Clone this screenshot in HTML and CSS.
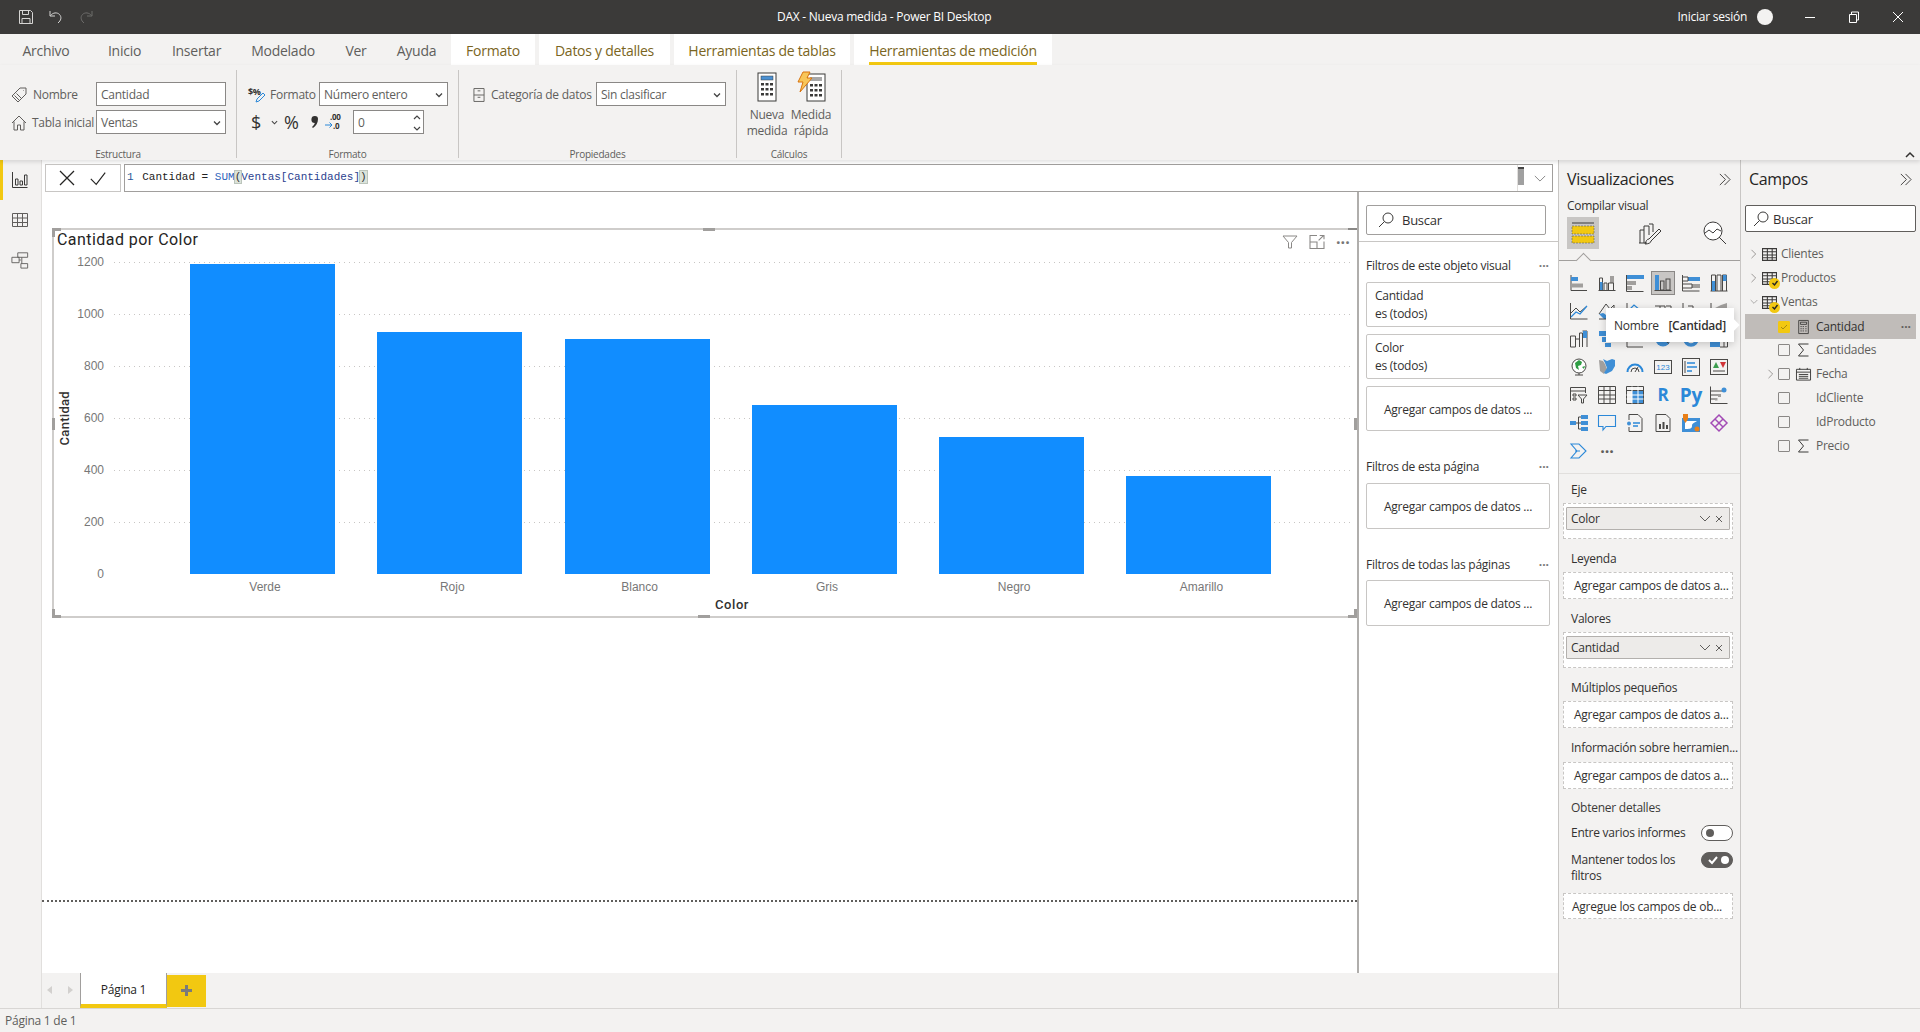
FILE: index.html
```html
<!DOCTYPE html>
<html lang="es">
<head>
<meta charset="utf-8">
<title>DAX - Nueva medida - Power BI Desktop</title>
<link rel="stylesheet" href="styles.css">
</head>
<body>
<header class="titlebar">
  <div class="qat">
    <svg class="qi" viewBox="0 0 16 16"><path d="M1.500 1.500h11l2 2v11h-13zM4.500 1.500v4h6v-4M4 14.500v-5h8v5"/></svg>
    <svg class="qi" viewBox="0 0 16 16"><path d="M2 2v5h5M2.500 6.500C5 3.500 9 3 11.500 5.500c2.500 2.700 1.500 6-1.500 8.500"/></svg>
    <svg class="qi off" viewBox="0 0 16 16"><path d="M14 2v5H9M13.500 6.500C11 3.500 7 3 4.500 5.500 2 8.200 3 11.500 6 14"/></svg>
  </div>
  <div class="doc-title">DAX - Nueva medida - Power BI Desktop</div>
  <div class="win">
    <span class="signin">Iniciar sesión</span>
    <span class="avatar"></span>
    <span class="wbtn"><svg viewBox="0 0 12 12"><path d="M1 6.500h10"/></svg></span>
    <span class="wbtn"><svg viewBox="0 0 12 12"><path d="M1.500 3.500h7v8h-7zM3.500 3.500V1h7v8h-2"/></svg></span>
    <span class="wbtn"><svg viewBox="0 0 12 12"><path d="M1 1l10 10M11 1L1 11"/></svg></span>
  </div>
</header>

<nav class="tabs">
  <span class="tab">Archivo</span>
  <span class="tab">Inicio</span>
  <span class="tab">Insertar</span>
  <span class="tab">Modelado</span>
  <span class="tab">Ver</span>
  <span class="tab">Ayuda</span>
  <span class="tab ctx">Formato</span>
  <span class="tab ctx">Datos y detalles</span>
  <span class="tab ctx">Herramientas de tablas</span>
  <span class="tab ctx on"><span class="tab-in">Herramientas de medición</span></span>
</nav>

<section class="ribbon">
  <div class="group g1">
    <div class="g-body">
      <div class="frow f1">
        <span class="flabel"><svg class="ri" viewBox="0 0 16 16"><path d="M1 9l8-8h6v6l-8 8zM12 3.500h.5M3.500 8.500l5 5M5.500 6.500l5 5"/></svg>Nombre</span>
        <span class="input">Cantidad</span>
      </div>
      <div class="frow f1">
        <span class="flabel tight"><svg class="ri" viewBox="0 0 16 16"><path d="M1 8l7-7 7 7M3 6.500V15h3.500v-5h3v5H13V6.500"/></svg>Tabla inicial</span>
        <span class="input sel">Ventas<svg class="dd" viewBox="0 0 8 8"><path d="M1 2.500l3 3 3-3"/></svg></span>
      </div>
    </div>
    <div class="g-label">Estructura</div>
  </div>
  <div class="group g2">
    <div class="g-body">
      <div class="frow f2">
        <span class="flabel"><svg class="ri wide" viewBox="0 0 18 16"><text x="0" y="8" class="dollar">$%</text><path class="pen" d="M8 15l1-3 6-6 2 2-6 6z"/></svg>Formato</span>
        <span class="input sel">Número entero<svg class="dd" viewBox="0 0 8 8"><path d="M1 2.500l3 3 3-3"/></svg></span>
      </div>
      <div class="frow f2b">
        <span class="sym">$</span>
        <svg class="tiny" viewBox="0 0 8 8"><path d="M1 2.500l3 3 3-3"/></svg>
        <span class="sym">%</span>
        <svg class="comma" viewBox="0 0 8 14"><path d="M4 1a3 3 0 0 1 3 3c0 4-2 7-5 9l-1-1c1.500-1.200 2.500-2.500 2.800-4A3 3 0 0 1 4 1z"/></svg>
        <svg class="dec" viewBox="0 0 18 18"><text x="5" y="7" class="dec-t">.00</text><text x="8" y="16" class="dec-t">.0</text><path class="arrow" d="M0 12h7M4.500 9.500L7 12l-2.500 2.500"/></svg>
        <span class="input spin">0<svg class="spin-i" viewBox="0 0 8 20"><path d="M1 6l3-3 3 3M1 14l3 3 3-3"/></svg></span>
      </div>
    </div>
    <div class="g-label">Formato</div>
  </div>
  <div class="group g3">
    <div class="g-body">
      <div class="frow f3">
        <span class="flabel"><svg class="ri" viewBox="0 0 13 16"><path d="M1 1h11v14H1zM1 8h11M5 3.500h3M5 10.500h3"/></svg>Categoría de datos</span>
        <span class="input sel">Sin clasificar<svg class="dd" viewBox="0 0 8 8"><path d="M1 2.500l3 3 3-3"/></svg></span>
      </div>
    </div>
    <div class="g-label">Propiedades</div>
  </div>
  <div class="group g4">
    <div class="g-body bigs">
      <div class="big">
        <svg class="big-i" viewBox="0 0 30 30">
          <rect class="calc" x="6" y="1" width="18" height="28"/><rect class="calc-b" x="9" y="4" width="12" height="4"/>
          <path class="keys" d="M9 11h3v2.500H9zM13.500 11h3v2.500h-3zM18 11h3v2.500h-3zM9 16h3v2.500H9zM13.500 16h3v2.500h-3zM18 16h3v2.500h-3zM9 21h3v2.500H9zM13.500 21h3v2.500h-3zM18 21h3v2.500h-3z"/>
        </svg>
        <span>Nueva<br>medida</span>
      </div>
      <div class="big">
        <svg class="big-i" viewBox="0 0 30 30">
          <rect class="calc" x="11" y="2" width="18" height="27"/><rect class="calc-g" x="14" y="5" width="12" height="4"/>
          <path class="keys" d="M14 12h3v2.500h-3zM18.500 12h3v2.500h-3zM23 12h3v2.500h-3zM14 17h3v2.500h-3zM18.500 17h3v2.500h-3zM23 17h3v2.500h-3zM14 22h3v2.500h-3zM18.500 22h3v2.500h-3zM23 22h3v2.500h-3z"/>
          <path class="bolt" d="M7 0h7l-3 6h5L4 20l3-10H2z"/>
        </svg>
        <span>Medida<br>rápida</span>
      </div>
    </div>
    <div class="g-label">Cálculos</div>
  </div>
  <svg class="collapse" viewBox="0 0 10 8"><path d="M1 6l4-4 4 4"/></svg>
</section>

<main class="main">
  <aside class="nav">
    <div class="nav-item on"><svg viewBox="0 0 18 18"><path d="M1.500 1v15.500h15M4.500 14V8h2.500v6zM9 14V10h2.500v4zM13.500 14V4H16v10z"/></svg></div>
    <div class="nav-item"><svg viewBox="0 0 18 18"><path d="M1.500 2.500h15v13h-15zM1.500 7h15M1.500 11.500h15M6.500 2.500v13M11.500 2.500v13"/></svg></div>
    <div class="nav-item"><svg viewBox="0 0 20 20"><path d="M7.500 2h11v5h-11zM1 7h8v6H1zM11 14h7.500v5H11zM9 10h2M12 7v7"/></svg></div>
  </aside>

  <div class="center">
    <div class="formula">
      <div class="fx-btns">
        <svg viewBox="0 0 18 18"><path d="M2 2l14 14M16 2L2 16"/></svg>
        <svg viewBox="0 0 20 18"><path d="M2 10l6 6L18 3"/></svg>
      </div>
      <div class="fx-input">
        <code class="code"><span class="ln">1</span> Cantidad = <span class="fn">SUM</span><span class="par">(</span><span class="ref">Ventas[Cantidades]</span><span class="par">)</span></code>
        <div class="fx-end">
          <span class="mini"></span>
          <svg class="fx-dd" viewBox="0 0 14 8"><path d="M1 1l6 6 6-6"/></svg>
        </div>
      </div>
    </div>
    <div class="work">
      <div class="canvas">
        <article class="visual">
          <i class="h tl"></i><i class="h tc"></i><i class="h tr"></i><i class="h ml"></i><i class="h mr"></i><i class="h bl"></i><i class="h bc"></i><i class="h br"></i>
          <div class="v-head">
            <h2 class="v-title">Cantidad por Color</h2>
            <div class="v-tools">
              <svg viewBox="0 0 16 14"><path d="M1 1h14L9.500 7.500V13h-3V7.500z"/></svg>
              <svg viewBox="0 0 14 13"><path d="M7 .5H.5v12h13V6M.5 6.500H7v6M8.500 5L13 .5M9.500.5h4V4"/></svg>
              <span class="dots">···</span>
            </div>
          </div>
          <div class="chart">
            <div class="y-title">Cantidad</div>
            <div class="y-labels"><span>1200</span><span>1000</span><span>800</span><span>600</span><span>400</span><span>200</span><span>0</span></div>
            <div class="plot">
              <div class="grid-lines"><i></i><i></i><i></i><i></i><i></i><i></i></div>
              <div class="bars">
                <div class="bar" style="height:99.36%"></div>
                <div class="bar" style="height:77.56%"></div>
                <div class="bar" style="height:75.32%"></div>
                <div class="bar" style="height:54.17%"></div>
                <div class="bar" style="height:43.91%"></div>
                <div class="bar" style="height:31.41%"></div>
              </div>
            </div>
            <div class="x-labels"><span>Verde</span><span>Rojo</span><span>Blanco</span><span>Gris</span><span>Negro</span><span>Amarillo</span></div>
            <div class="x-title">Color</div>
          </div>
        </article>
        <div class="page-end"></div>
      </div>
      <aside class="filters">
        <div class="f-search-wrap">
          <div class="search f-search"><svg class="mag" viewBox="0 0 16 16"><circle cx="10" cy="6" r="5"/><path d="M6.500 9.500L1 15"/></svg>Buscar</div>
        </div>
        <div class="f-head first"><span>Filtros de este objeto visual</span><span class="fdots">···</span></div>
        <div class="f-card"><span>Cantidad</span><span>es (todos)</span></div>
        <div class="f-card"><span>Color</span><span>es (todos)</span></div>
        <div class="f-card add">Agregar campos de datos ...</div>
        <div class="f-head"><span>Filtros de esta página</span><span class="fdots">···</span></div>
        <div class="f-card add tall">Agregar campos de datos ...</div>
        <div class="f-head last"><span>Filtros de todas las páginas</span><span class="fdots">···</span></div>
        <div class="f-card add tall">Agregar campos de datos ...</div>
      </aside>
    </div>
    <div class="pagebar">
      <span class="pg-arrow left"></span>
      <span class="pg-arrow right"></span>
      <span class="pg-tab">Página 1</span>
      <span class="pg-add"></span>
    </div>
  </div>

  <aside class="viz">
    <div class="p-head"><span>Visualizaciones</span><svg class="chev2" viewBox="0 0 14 14"><path d="M2 1l6 6-6 6M7 1l6 6-6 6"/></svg></div>
    <div class="p-sub">Compilar visual</div>
    <div class="modes">
      <span class="mode on"><svg viewBox="0 0 24 24"><path class="ln-d" d="M1 2h22"/><rect class="ye" x="1" y="5" width="22" height="8"/><rect class="ye" x="1" y="15" width="22" height="7"/></svg></span>
      <span class="mode"><svg viewBox="0 0 24 24"><path class="ln-d" d="M2 22V9h4M6 22V5h5v9M11 3h4v8M1 22h8"/><path class="ln-d" d="M21 8L11 18c-2 0-3 2-4 5 3 0 6-1 6-3L23 10z"/></svg></span>
      <span class="mode an"><svg viewBox="0 0 24 24"><circle class="ln-d2" cx="10" cy="10" r="9"/><path class="ln-d" d="M2 12l4-3 4 3 4-4 4 2M16 16l7 7"/></svg></span>
      <i class="notch"></i>
    </div>
    <div class="icons">
      <!-- row 1 -->
      <svg class="vi" viewBox="0 0 18 18"><path class="ax" d="M1 1v15.500h16"/><rect class="bl" x="1" y="3" width="7" height="4"/><rect class="gr" x="1" y="9.500" width="12" height="4"/></svg>
      <svg class="vi" viewBox="0 0 18 18"><path class="ax" d="M.5 16.500h17M1.500 16V4h3v12M6 16V9h3v7"/><rect class="bl" x="2" y="8" width="2.500" height="8"/><rect class="gr" x="12" y="2" width="4" height="7"/><path class="ax" d="M10.500 16V9h5v7"/></svg>
      <svg class="vi" viewBox="0 0 18 18"><rect class="bl" x="0" y="1" width="18" height="4"/><rect class="gr" x="0" y="7" width="10" height="4"/><rect class="gr" x="0" y="12" width="6" height="4"/><path class="ax" d="M.5 1v16.500h17"/></svg>
      <span class="vi-sel"><svg class="vi" viewBox="0 0 18 18"><rect class="bl" x="1" y="1" width="4" height="15"/><rect class="ax" x="6.500" y="7" width="3.500" height="9"/><rect class="ax" x="12" y="5" width="4" height="11"/><path class="ax" d="M.5 16.500h17"/></svg></span>
      <svg class="vi" viewBox="0 0 18 18"><path class="ax" d="M.5 1v16h17"/><rect class="bl" x="6" y="3" width="12" height="4"/><rect class="gr" x="10" y="10" width="8" height="4"/><path class="ax" d="M1 3h5v4H1M1 10h9v4H1"/></svg>
      <svg class="vi" viewBox="0 0 18 18"><path class="ax" d="M.5 17h17M1.500 17V1h4v16M7 17V1h4v16M12.500 17V1h4v16"/><rect class="bl" x="2" y="7" width="3" height="10"/><rect class="bl" x="13" y="1" width="3.500" height="6"/></svg>
      <!-- row 2 -->
      <svg class="vi" viewBox="0 0 18 18"><path class="ax" d="M.5 1v16h17"/><path class="ax" d="M1 11l5-5 4 4 7-6"/><path class="line-b" d="M1 15l5-5 4 2 7-8"/></svg>
      <svg class="vi" viewBox="0 0 18 18"><path class="bl" d="M1 12l5 5h5l-4-5-2-1z"/><path class="ax" d="M1 12L8 2l4 5 4-4v14H1"/></svg>
      <svg class="vi" viewBox="0 0 18 18"><path class="ax" d="M1 1v16h16"/><path class="line-b" d="M2 9l6-6 6 5"/></svg>
      <svg class="vi" viewBox="0 0 18 18"><path class="ax" d="M1 4h5v13M6 4h5v13M12 4h5v13"/></svg>
      <svg class="vi" viewBox="0 0 18 18"><path class="ax" d="M1 1v16h16M6 4h5v13"/></svg>
      <svg class="vi" viewBox="0 0 18 18"><path class="ax" d="M1 1v16h16"/><path class="gr" d="M5 6l6-3v6l-6 3zM11 3l6-2v6l-6 2z"/></svg>
      <!-- row 3 -->
      <svg class="vi" viewBox="0 0 18 18"><path class="ax" d="M.5 6v11M.5 17h5V6H.5M5.500 9h4v8M9.500 17V3h3M12.500 3v14M12.500 1H17v16"/><rect class="bl" x="13" y="1" width="4" height="7"/></svg>
      <svg class="vi" viewBox="0 0 18 18"><rect class="bl" x="1" y="1" width="15" height="5"/><rect class="bl" x="4" y="7" width="11" height="5"/><rect class="bl" x="7" y="13" width="6" height="4"/></svg>
      <svg class="vi" viewBox="0 0 18 18"><path class="ax" d="M1 1v16h16"/><rect class="bl" x="11" y="6" width="4" height="4"/><rect class="gr" x="5" y="9" width="3" height="3"/></svg>
      <svg class="vi" viewBox="0 0 18 18"><circle class="pie" cx="9" cy="9" r="7.500"/><path class="ax" d="M9 9V1.500M9 9l6 4.500"/></svg>
      <svg class="vi" viewBox="0 0 18 18"><circle class="donut" cx="9" cy="9" r="6"/></svg>
      <svg class="vi" viewBox="0 0 18 18"><rect class="bl" x="0" y="1" width="10" height="16"/><path class="ax" d="M10 1h7.500v16H10M10 10h7.500M14 10v7"/></svg>
      <!-- row 4 -->
      <svg class="vi" viewBox="0 0 18 18"><circle class="globe" cx="9" cy="8" r="7"/><path class="grn" d="M5 5l4-3 3 2-1 3-3 1 1 4-3-2zM12 9l3-1-1 3z"/><path class="ax" d="M5 17h8M9 15v2"/></svg>
      <svg class="vi" viewBox="0 0 18 18"><path class="gr" d="M1 2l4 1 2 3 2 5-3 5-4-3z"/><path class="bl" d="M5 1l4 2 5-2 3 1v6l-3 5-6 3-2-1 3-5-2-5z"/></svg>
      <svg class="vi" viewBox="0 0 18 18"><path class="ax2" d="M1.500 14a7.500 7.500 0 0 1 15 0"/><path class="ax" d="M5 14a4 4 0 0 1 8 0M9 14l3-5"/></svg>
      <svg class="vi" viewBox="0 0 18 18"><rect class="ax" x=".5" y="2.500" width="17" height="13"/><text x="9" y="12" class="num">123</text></svg>
      <svg class="vi" viewBox="0 0 18 18"><rect class="ax" x=".5" y=".5" width="17" height="17"/><path class="line-b2" d="M5 5h8M5 9h10M5 13h5"/><path class="ax" d="M3 3v12"/></svg>
      <svg class="vi" viewBox="0 0 18 18"><rect class="ax" x=".5" y="1.500" width="17" height="15"/><path class="grn2" d="M6 4l3 6H3z"/><path class="red" d="M10 4h6l-3 6z"/><path class="ax" d="M3 13h12"/></svg>
      <!-- row 5 -->
      <svg class="vi" viewBox="0 0 18 18"><path class="ax" d="M.5 15V1.500h15V7M.5 5h15M3 8h3v2H3zM3 12h3v2H3z"/><path class="ax" d="M8 9h9l-3.500 4v4h-2v-4z"/></svg>
      <svg class="vi" viewBox="0 0 18 18"><path class="ax" d="M.5.5h17v17H.5zM.5 4.500h17M.5 9h17M.5 13h17M6 .5v17M12 .5v17"/></svg>
      <svg class="vi" viewBox="0 0 18 18"><rect class="bl" x="6" y="5" width="12" height="13"/><path class="ax" d="M.5.5h17v17H.5zM.5 4.500h17"/><path class="wht" d="M.5 9h17M.5 13h17M6 .5v17M12 .5v17"/></svg>
      <span class="vi-t r">R</span>
      <span class="vi-t py">Py</span>
      <svg class="vi" viewBox="0 0 18 18"><path class="ax" d="M.5.5v17h17M1 5h11M1 9h7M1 13h4"/><circle class="bl" cx="14" cy="4" r="2.500"/><rect class="gr" x="8" y="8" width="3" height="3"/><rect class="gr" x="5" y="12" width="2.500" height="2.500"/></svg>
      <!-- row 6 -->
      <svg class="vi" viewBox="0 0 18 18"><rect class="bl" x="0" y="7" width="6" height="4"/><rect class="bl" x="11" y="1" width="7" height="4"/><rect class="bl" x="11" y="7" width="7" height="4"/><rect class="bl" x="11" y="13" width="7" height="4"/><path class="ax" d="M6 9h5M8.500 3v12M8.500 3H11M8.500 15H11"/></svg>
      <svg class="vi" viewBox="0 0 18 18"><path class="lb" d="M.5 1.500h17v11H8L5 16v-3.500H.5z"/></svg>
      <svg class="vi" viewBox="0 0 18 18"><path class="ax" d="M3 6V.5h9l4 4v13H3V13"/><circle class="bl" cx="3" cy="9.500" r="2"/><path class="line-b2" d="M7 9h7M7 12h5"/></svg>
      <svg class="vi" viewBox="0 0 18 18"><path class="ax" d="M2 .5h10l4 4v13H2z"/><path class="ds" d="M5 10h2v5H5zM8.500 8h2v7h-2zM12 11h2v4h-2z"/></svg>
      <svg class="vi" viewBox="0 0 18 18"><path class="bl" d="M0 4h18v14H0z"/><path class="wht-f" d="M3 7h12c-3 2-5 2-5 5s-3 3-7 3z"/><path class="or" d="M1 0h5v5L3.500 9 1 5z"/><circle class="or" cx="15" cy="15" r="2.500"/></svg>
      <svg class="vi" viewBox="0 0 18 18"><path class="pur" d="M9 1l8 8-8 8-8-8zM5 5l8 8M13 5L5 13"/></svg>
      <!-- row 7 -->
      <svg class="vi" viewBox="0 0 18 18"><path class="lb" d="M1 2h8l7 7-7 7H1l6-7zM5 9h5"/></svg>
      <span class="vi-t more">···</span>
    </div>

    <div class="wells">
      <div class="wl"><label>Eje</label><div class="well filled"><div class="field"><span>Color</span><svg viewBox="0 0 26 10"><path d="M1 2l5 5 5-5M17 2l6 6M23 2l-6 6"/></svg></div></div></div>
      <div class="wl"><label>Leyenda</label><div class="well">Agregar campos de datos a...</div></div>
      <div class="wl"><label>Valores</label><div class="well filled"><div class="field"><span>Cantidad</span><svg viewBox="0 0 26 10"><path d="M1 2l5 5 5-5M17 2l6 6M23 2l-6 6"/></svg></div></div></div>
      <div class="wl"><label>Múltiplos pequeños</label><div class="well">Agregar campos de datos a...</div></div>
      <div class="wl"><label>Información sobre herramien...</label><div class="well">Agregar campos de datos a...</div></div>
      <div class="drill">Obtener detalles</div>
      <div class="opt one"><span>Entre varios informes</span><span class="tg off"></span></div>
      <div class="opt two"><span>Mantener todos los filtros</span><span class="tg on"><svg viewBox="0 0 10 8"><path d="M1 4l3 3 5-6"/></svg></span></div>
      <div class="well last">Agregue los campos de ob...</div>
    </div>
  </aside>

  <aside class="fields">
    <div class="p-head"><span>Campos</span><svg class="chev2" viewBox="0 0 14 14"><path d="M2 1l6 6-6 6M7 1l6 6-6 6"/></svg></div>
    <div class="search fld-search"><svg class="mag" viewBox="0 0 16 16"><circle cx="10" cy="6" r="5"/><path d="M6.500 9.500L1 15"/></svg>Buscar</div>
    <div class="tree">
      <div class="t0"><svg class="tc" viewBox="0 0 8 12"><path d="M1 1l5 5-5 5"/></svg><svg class="ti" viewBox="0 0 14 12"><path d="M.5.5h13v11H.5zM.5 3.500h13M.5 6.500h13M.5 9h13M5 .5v11M9.500.5v11"/></svg><span>Clientes</span></div>
      <div class="t0"><svg class="tc" viewBox="0 0 8 12"><path d="M1 1l5 5-5 5"/></svg><span class="ti-w"><svg class="ti" viewBox="0 0 14 12"><path d="M.5.5h13v11H.5zM.5 3.500h13M.5 6.500h13M.5 9h13M5 .5v11M9.500.5v11"/></svg><i class="badge"><svg viewBox="0 0 8 8"><path d="M1.500 4l2 2 3-4"/></svg></i></span><span>Productos</span></div>
      <div class="t0"><svg class="tc" viewBox="0 0 12 8"><path d="M1 1l5 5 5-5"/></svg><span class="ti-w"><svg class="ti" viewBox="0 0 14 12"><path d="M.5.5h13v11H.5zM.5 3.500h13M.5 6.500h13M.5 9h13M5 .5v11M9.500.5v11"/></svg><i class="badge"><svg viewBox="0 0 8 8"><path d="M1.500 4l2 2 3-4"/></svg></i></span><span>Ventas</span></div>
      <div class="t1 sel"><i></i><span class="cb on"><svg viewBox="0 0 10 10"><path d="M2 5l2 2 4-4"/></svg></span><svg class="ti" viewBox="0 0 12 16"><path d="M.5.5h11v15H.5zM2.500 2.500h7V5h-7zM2.500 7.500H4M5 7.500h1.500M8 7.500h1.500M2.500 10H4M5 10h1.500M8 10h1.500M2.500 12.500H4M5 12.500h1.500M8 12.500h1.500"/></svg><span>Cantidad</span><span class="row-dots">···</span></div>
      <div class="t1"><i></i><span class="cb"></span><svg class="ti" viewBox="0 0 12 14"><path d="M11 1H1l5 6-5 6h10"/></svg><span>Cantidades</span></div>
      <div class="t1"><svg class="tc sub" viewBox="0 0 8 12"><path d="M1 1l5 5-5 5"/></svg><span class="cb"></span><svg class="ti" viewBox="0 0 16 14"><path d="M.5 2h15v11.500H.5zM.5 5h15M4 .5v2M12 .5v2M3 7.500h10M3 9.500h10M3 11.500h10"/></svg><span>Fecha</span></div>
      <div class="t1"><i></i><span class="cb"></span><i></i><span>IdCliente</span></div>
      <div class="t1"><i></i><span class="cb"></span><i></i><span>IdProducto</span></div>
      <div class="t1"><i></i><span class="cb"></span><svg class="ti" viewBox="0 0 12 14"><path d="M11 1H1l5 6-5 6h10"/></svg><span>Precio</span></div>
    </div>
  </aside>
  <div class="tooltip"><span>Nombre</span><b>[Cantidad]</b></div>
</main>

<footer class="status">Página 1 de 1</footer>
</body>
</html>
```

FILE: styles.css
```css
* { box-sizing: border-box; }
html, body { margin: 0; height: 100%; }
body {
  width: 1920px; height: 1032px; overflow: hidden;
  display: flex; flex-direction: column;
  background: #f3f2f1; color: #323130;
  font: 12px/16px "Open Sans", "Noto Sans", sans-serif;
  letter-spacing: -.25px;
}
svg { display: block; fill: none; overflow: visible; }
i { font-style: normal; display: block; }

/* title bar */
.titlebar { height: 34px; flex: none; background: #3b3a39; color: #fff; display: grid; grid-template-columns: 777px 1fr auto; align-items: center; }
.qat { display: flex; gap: 14px; padding-left: 18px; }
.qi { width: 16px; height: 16px; stroke: #d6d5d4; stroke-width: 1; }
.qi.off { stroke: #6d6c6b; }
.doc-title { font-size: 12px; }
.win { display: flex; align-items: center; }
.signin { margin-right: 10px; }
.avatar { width: 16px; height: 16px; border-radius: 50%; background: #f3f2f1; margin-right: 15px; }
.wbtn { width: 44px; display: flex; justify-content: center; }
.wbtn svg { width: 12px; height: 12px; stroke: #fff; stroke-width: 1; }

/* tabs */
.tabs { height: 31px; flex: none; display: grid; grid-template-columns: 92px 65px 79px 94px 52px 69px 88px 135px 180px 198px; background: #f3f2f1; }
.tab { font-size: 14px; line-height: 33px; color: #605e5c; text-align: center; white-space: nowrap; }
.tab.ctx { background: #fff; color: #7a6522; margin-right: 4px; }
.tab.on { margin: 0; }
.tab-in { display: block; margin: 0 15px; height: 31px; border-bottom: 3px solid #f2c811; }

/* ribbon */
.ribbon { height: 95px; flex: none; display: flex; padding-top: 5px; background: #f3f2f1; box-shadow: 0 2px 4px rgba(0,0,0,.12); position: relative; z-index: 2; color: #605e5c; }
.group { height: 88px; display: flex; flex-direction: column; border-right: 1px solid #c8c6c4; }
.g1 { width: 237px; padding-left: 11px; }
.g2 { width: 222px; padding-left: 11px; }
.g3 { width: 278px; padding-left: 14px; }
.g4 { width: 105px; padding-left: 8px; }
.g-body { padding-top: 12px; display: flex; flex-direction: column; gap: 4px; }
.g-label { margin-top: auto; margin-bottom: -2px; font-size: 10px; line-height: 12px; text-align: center; color: #605e5c; }
.g1 .g-label { margin-right: 11px; }
.g2 .g-label { margin-right: 11px; }
.g3 .g-label { margin-right: 14px; }
.g4 .g-label { margin-right: 8px; }
.frow { display: grid; height: 24px; align-items: center; }
.f1 { grid-template-columns: 85px 130px; }
.f2 { grid-template-columns: 71px 129px; }
.f2b { grid-template-columns: 20px 13px 27px 14px 28px 71px; padding-left: 3px; }
.f3 { grid-template-columns: 123px 130px; }
.flabel { display: flex; align-items: center; gap: 6px; white-space: nowrap; padding-top: 1px; }
.flabel.tight { gap: 5px; }
.ri { width: 16px; height: 16px; flex: none; stroke: #605e5c; stroke-width: 1; }
.f2 .ri { margin-right: -1px; }
.ri.wide { width: 18px; margin-right: -2px; }
.f3 .ri { width: 12px; margin-right: 0; }
.dollar { font: bold 9px "Open Sans", sans-serif; fill: #323130; stroke: none; letter-spacing: -.5px; }
.pen { stroke: #2b88d8; }
.input { height: 24px; background: #fff; border: 1px solid #8a8886; padding: 1px 4px 0; line-height: 22px; display: flex; justify-content: space-between; align-items: center; color: #605e5c; }
.dd { width: 8px; height: 8px; stroke: #444; stroke-width: 1.300; }
.sym { font-size: 18px; color: #323130; font-weight: 400; }
.comma { width: 8px; height: 14px; fill: #323130; }
.tiny { width: 7px; height: 7px; stroke: #444; stroke-width: 1.200; }
.dec { width: 18px; height: 18px; }
.dec-t { font: bold 8px "Open Sans", sans-serif; fill: #323130; }
.arrow { stroke: #2b88d8; }
.spin { padding-right: 2px; }
.spin-i { width: 8px; height: 20px; stroke: #444; stroke-width: 1.200; }
.bigs { flex-direction: row; gap: 0; padding-top: 2px; }
.big { width: 44px; display: flex; flex-direction: column; align-items: center; text-align: center; gap: 5px; }
.big-i { width: 30px; height: 30px; }
.calc { fill: #fff; stroke: #3b3a39; }
.calc-b { fill: #4a90d2; stroke: #3b3a39; stroke-width: .5; }
.calc-g { fill: #a8a8a8; }
.keys { fill: #3b3a39; }
.bolt { fill: #f8c659; stroke: #d9730d; }
.collapse { width: 10px; height: 8px; stroke: #323130; stroke-width: 1.500; margin: 81px 5px 0 auto; }

/* main */
.main { flex: 1; display: flex; min-height: 0; position: relative; }
.nav { width: 42px; flex: none; border-right: 1px solid #e1dfdd; background: #f3f2f1; }
.nav-item { height: 40px; display: flex; align-items: center; justify-content: center; padding-right: 1px; }
.nav-item svg { width: 18px; height: 18px; stroke: #605e5c; stroke-width: 1; }
.nav-item.on { border-left: 3px solid #f2c811; padding-right: 4px; }
.nav-item.on svg { stroke: #3b3a39; }
.center { width: 1516px; flex: none; display: flex; flex-direction: column; background: #fff; }

/* formula */
.formula { height: 32px; flex: none; padding: 4px 5px 0 3px; display: flex; gap: 3px; background: #fff; }
.fx-btns { width: 76px; border: 1px solid #c8c6c4; display: flex; align-items: center; justify-content: center; gap: 13px; padding-right: 2px; }
.fx-btns svg { width: 18px; height: 18px; stroke: #252423; stroke-width: 1.300; }
.fx-input { flex: 1; border: 1px solid #a19f9d; display: flex; justify-content: space-between; padding-left: 2px; }
.code { font: 11px/24px "Liberation Mono", monospace; letter-spacing: 0; color: #222; white-space: pre; }
.ln { color: #2b5797; margin-right: 2px; }
.fn { color: #3165bb; }
.ref { color: #2b3f8f; }
.par { background: #dbe3da; outline: 1px solid #bcc5bc; color: #333; }
.fx-end { width: 35px; border-left: 1px solid #e1dfdd; display: flex; align-items: center; position: relative; }
.mini { width: 6px; height: 18px; background: #a0a0a0; border-top: 2px solid #444; margin: -5px 10px 0 0; box-shadow: 6px -8px 0 -7px #444; }
.fx-dd { width: 12px; height: 7px; stroke: #777; }

/* canvas */
.work { flex: 1; min-height: 0; display: flex; }
.canvas { width: 1315px; flex: none; padding: 36px 0 0 10px; background: #fff; }
.visual { width: 1305px; height: 390px; border: 2px solid #cfcdcb; border-right: 0; position: relative; }
.h { position: absolute; background: #a19f9d; }
.h.tl { left: -2px; top: -2px; width: 9px; height: 9px; background: none; border: 3px solid #a19f9d; border-right: 0; border-bottom: 0; }
.h.tc { left: 644px; top: -2px; width: 12px; height: 3px; }
.h.tr { right: 0; top: -2px; width: 9px; height: 2px; background: #8a8886; }
.h.ml { left: -2px; top: 188px; width: 3px; height: 12px; }
.h.mr { right: 0; top: 188px; width: 3px; height: 12px; }
.h.bl { left: -2px; bottom: -2px; width: 9px; height: 9px; background: none; border: 3px solid #a19f9d; border-right: 0; border-top: 0; }
.h.bc { left: 644px; bottom: -2px; width: 12px; height: 3px; }
.h.br { right: 0; bottom: -2px; width: 9px; height: 9px; background: none; border: 3px solid #a19f9d; border-left: 0; border-top: 0; }
.v-head { height: 32px; display: flex; justify-content: space-between; padding: 0 4px 0 3px; }
.v-title { margin: 0; font: 400 16px/20px Roboto, sans-serif; letter-spacing: .45px; color: #252423; }
.v-tools { display: flex; align-items: center; gap: 11px; height: 24px; color: #8a8886; padding-right: 3px; }
.v-tools svg { width: 16px; height: 14px; stroke: #8a8886; stroke-width: 1; }
.dots { font-size: 16px; font-weight: 700; line-height: 14px; letter-spacing: 0; color: #777; width: 14px; }
.chart { display: grid; grid-template-columns: 20px 32px 1244px; grid-template-rows: 312px 39px; }
.y-title { grid-column: 1; grid-row: 1; writing-mode: vertical-rl; transform: rotate(180deg); justify-self: center; align-self: center; margin-left: 2px; font: 500 13px/16px Roboto, sans-serif; letter-spacing: .3px; color: #323130; }
.y-labels { grid-column: 2; grid-row: 1; margin: -8px 2px -8px 0; display: flex; flex-direction: column; justify-content: space-between; text-align: right; font: 12px/16px "Liberation Sans", sans-serif; letter-spacing: 0; color: #777; }
.plot { grid-column: 3; grid-row: 1; margin-left: 8px; width: 1236px; height: 312px; position: relative; }
.grid-lines { height: 100%; display: flex; flex-direction: column; }
.grid-lines i { flex: 1; background: repeating-linear-gradient(90deg, #c8c6c4 0 1px, transparent 1px 5px) top left / 100% 1px no-repeat; }
.bars { position: absolute; inset: 0 0 0 76px; display: flex; align-items: flex-end; gap: 42.300px; }
.bar { width: 145px; background: #118dff; }
.x-labels { grid-column: 3; grid-row: 2; margin-left: 86.500px; display: flex; height: 16px; margin-top: 5px; gap: 42.300px; font: 12px/16px "Liberation Sans", sans-serif; letter-spacing: 0; color: #777; }
.x-labels span { width: 145px; text-align: center; flex: none; }
.x-title { grid-column: 3; grid-row: 2; margin: 23px 0 0 8px; width: 1236px; text-align: center; font: 500 13px/16px Roboto, sans-serif; letter-spacing: .6px; color: #323130; }
.page-end { height: 0; margin: 282px 0 0 -10px; border-top: 2px dotted #605e5c; }

/* filters */
.filters { flex: 1; border-left: 2px solid #b0aeac; background: #fff; padding: 0 7px; }
.f-search-wrap { margin: 0 -7px; padding: 13px 7px 6px; border-bottom: 1px solid #c8c6c4; }
.search { display: flex; align-items: center; background: #fff; border: 1px solid #a19f9d; border-radius: 2px; font-size: 13px; }
.mag { width: 16px; height: 16px; stroke: #3b3a39; stroke-width: 1; flex: none; }
.f-search { width: 180px; height: 30px; padding-left: 11px; gap: 8px; }
.f-head { display: flex; justify-content: space-between; height: 16px; margin: 28px 0 8px; padding-right: 2px; color: #323130; }
.f-head.first { margin-top: 16px; }
.f-head.last { margin-top: 28px; margin-bottom: 7px; }
.fdots { letter-spacing: 0; font-weight: 700; color: #777; }
.f-card { width: 184px; height: 45px; margin-bottom: 7px; border: 1px solid #c8c6c4; border-radius: 2px; padding: 4px 0 0 8px; display: flex; flex-direction: column; line-height: 18px; color: #323130; }
.f-card.add { padding: 2px 0 0; justify-content: center; align-items: center; white-space: nowrap; }
.f-card.tall { height: 46px; }

/* visualizations */
.viz { width: 182px; flex: none; border-left: 1px solid #c8c6c4; position: relative; background: #f3f2f1; }
.p-head { height: 38px; padding: 0 9px 0 8px; display: flex; justify-content: space-between; align-items: center; font-size: 16px; font-weight: 500; letter-spacing: -.35px; color: #252423; }
.chev2 { width: 13px; height: 13px; stroke: #3b3a39; stroke-width: 1; }
.p-sub { height: 16px; padding-left: 8px; font-weight: 500; letter-spacing: -.3px; }
.modes { height: 47px; padding: 3px 0 0 8px; display: flex; gap: 35px; border-bottom: 1px solid #a19f9d; position: relative; }
.mode { width: 32px; height: 32px; display: flex; align-items: center; justify-content: center; }
.mode.on { background: #c8c6c4; }
.mode.an { margin-left: -2px; }
.mode svg { width: 24px; height: 24px; }
.ln-d { stroke: #3b3a39; stroke-width: 1; fill: none; }
.ln-d2 { stroke: #3b3a39; stroke-width: 1; fill: #fff; }
.ye { fill: #f2c811; stroke: #605e5c; stroke-dasharray: 2 1; stroke-width: .6; }
.notch { position: absolute; left: 19px; bottom: -6px; width: 11px; height: 11px; background: #f3f2f1; border-left: 1px solid #a19f9d; border-top: 1px solid #a19f9d; transform: rotate(45deg); }
.icons { display: grid; grid-template-columns: repeat(6, 28px); grid-auto-rows: 28px; padding: 8px 0 0 6px; height: 212px; place-items: center; }
.vi { width: 18px; height: 18px; }
.vi-sel { width: 24px; height: 24px; border: 1px solid #8a8886; background: #c8c6c4; display: flex; align-items: center; justify-content: center; }
.ax { fill: none; stroke: #4a4947; stroke-width: 1; }
.ax2 { fill: none; stroke: #2b88d8; stroke-width: 2; }
.bl { fill: #3f8fd6; }
.gr { fill: #a19f9d; }
.lb { fill: none; stroke: #2b88d8; stroke-width: 1.100; }
.line-b { fill: none; stroke: #2b88d8; stroke-width: 1.200; }
.line-b2 { fill: none; stroke: #2b88d8; stroke-width: 1.500; }
.pie { fill: #3f8fd6; }
.donut { fill: none; stroke: #3f8fd6; stroke-width: 3.500; }
.globe { fill: #fff; stroke: #4a4947; }
.grn { fill: #2f9e44; }
.grn2 { fill: #3c9d4e; }
.red { fill: #d13438; }
.num { font: 8px "Liberation Sans", sans-serif; fill: #2b88d8; text-anchor: middle; letter-spacing: 0; }
.wht { fill: none; stroke: #fff; stroke-width: 1; }
.wht-f { fill: #fff; }
.ds { fill: #4a4947; }
.or { fill: #e97f18; }
.pur { fill: none; stroke: #a24bb5; stroke-width: 1.500; }
.vi-t { font-weight: 700; color: #2b88d8; letter-spacing: 0; line-height: 20px; }
.r { font-size: 17px; }
.py { font-size: 19px; }
.more { color: #605e5c; font-size: 16px; }

.wells { border-top: 1px solid #e1dfdd; padding: 8px 7px 0 4px; }
.wl { margin-bottom: 12px; }
.wl label { display: block; height: 16px; padding-left: 8px; margin-bottom: 5px; white-space: nowrap; color: #323130; }
.wl:nth-child(5) label { margin-bottom: 6px; }
.wl:nth-child(5) { margin-bottom: 11px; }
.well { height: 27px; background: #fff; border: 1px dashed #c8c6c4; padding-left: 10px; line-height: 26px; white-space: nowrap; }
.well.filled { height: 36px; padding: 3px 2px; }
.well.last { height: 26px; padding-left: 8px; margin-top: 9px; }
.field { height: 23px; background: #edebe9; border: 1px solid #b3b0ad; border-radius: 1px; padding: 0 4px; display: flex; align-items: center; justify-content: space-between; }
.field svg { width: 26px; height: 10px; stroke: #605e5c; stroke-width: 1; }
.drill { height: 16px; padding-left: 8px; font-weight: 500; color: #3b3a39; }
.opt { display: flex; justify-content: space-between; padding-left: 8px; }
.opt.one { margin-top: 9px; height: 16px; }
.opt.two { margin-top: 11px; height: 32px; }
.opt.two span:first-child { width: 115px; }
.tg { width: 32px; height: 16px; border-radius: 8px; flex: none; position: relative; border: 1px solid #605e5c; background: #fff; }
.tg::after { content: ""; position: absolute; top: 3px; width: 8px; height: 8px; border-radius: 50%; background: #605e5c; }
.tg.off::after { left: 4px; }
.tg.on { background: #605e5c; }
.tg.on::after { right: 3px; background: #fff; }
.tg.on svg { width: 10px; height: 8px; margin: 3px 0 0 6px; stroke: #fff; stroke-width: 2; }

/* fields */
.fields { width: 180px; flex: none; border-left: 1px solid #c8c6c4; background: #f3f2f1; }
.fields .p-head { padding-right: 8px; }
.fld-search { margin: 7px 4px 10px 4px; height: 27px; padding-left: 7px; gap: 4px; border-color: #605e5c; }
.tree { margin: 0 4px; }
.t0, .t1 { height: 24px; display: grid; align-items: center; white-space: nowrap; color: #605e5c; }
.t0 { grid-template-columns: 17px 19px 1fr; }
.t1 { grid-template-columns: 33px 18px 20px 1fr auto; }
.t1.sel { background: #c0bcb9; height: 25px; margin-bottom: -1px; color: #323130; }
.tc { width: 8px; height: 10px; stroke: #8a8886; stroke-width: 1; margin-left: 5px; }
.tc.sub { margin-left: 22px; }
.ti { width: 15px; height: 13px; stroke: #3b3a39; stroke-width: 1; }
.t1 .ti { height: 14px; }
.ti-w { position: relative; display: block; }
.badge { position: absolute; left: 7px; top: 6px; width: 11px; height: 11px; border-radius: 50%; background: #f2c811; }
.badge svg { width: 8px; height: 8px; margin: 1px 0 0 1.500px; stroke: #252423; stroke-width: 1.400; }
.cb { width: 12px; height: 12px; border: 1px solid #8a8886; border-radius: 1px; background: #f3f2f1; display: block; }
.cb.on { background: #f2c811; border-color: #f2c811; }
.cb.on svg { width: 10px; height: 10px; stroke: #a88c12; stroke-width: 1; }
.row-dots { padding-right: 5px; letter-spacing: 0; font-weight: 700; color: #605e5c; }

/* tooltip */
.tooltip { position: absolute; left: 1606px; top: 148px; width: 128px; height: 34px; background: #fff; box-shadow: 0 2px 8px rgba(0,0,0,.2); display: flex; align-items: center; justify-content: space-between; padding: 2px 8px 0; z-index: 5; color: #323130; }
.tooltip b { font-weight: 600; }
.tooltip::after { content: ""; position: absolute; right: -4px; top: 13px; width: 8px; height: 8px; background: #fff; transform: rotate(45deg); }

/* page bar */
.pagebar { height: 35px; flex: none; background: #f3f2f1; display: flex; padding-left: 3px; align-items: flex-start; }
.pg-arrow { height: 35px; position: relative; }
.pg-arrow.left { width: 21px; }
.pg-arrow.right { width: 14px; }
.pg-arrow::after { content: ""; position: absolute; top: 13px; left: 2px; border: 4px solid transparent; }
.pg-arrow.left::after { border-right: 5px solid #d2d0ce; border-left: 0; }
.pg-arrow.right::after { border-left: 5px solid #d2d0ce; border-right: 0; }
.pg-tab { width: 87px; height: 35px; background: #fff; border-left: 1px solid #a19f9d; border-right: 1px solid #a19f9d; border-bottom: 4px solid #f2c811; text-align: center; line-height: 34px; font-weight: 500; color: #252423; }
.pg-add { width: 39px; height: 32px; margin-top: 2px; background: #f2c811; position: relative; }
.pg-add::before, .pg-add::after { content: ""; position: absolute; background: #7a7a7a; }
.pg-add::before { left: 14px; top: 14px; width: 11px; height: 3px; }
.pg-add::after { left: 18px; top: 10px; width: 3px; height: 11px; }

/* status */
.status { height: 24px; flex: none; border-top: 1px solid #d8d6d4; background: #f3f2f1; padding-left: 5px; line-height: 23px; color: #605e5c; }
```
